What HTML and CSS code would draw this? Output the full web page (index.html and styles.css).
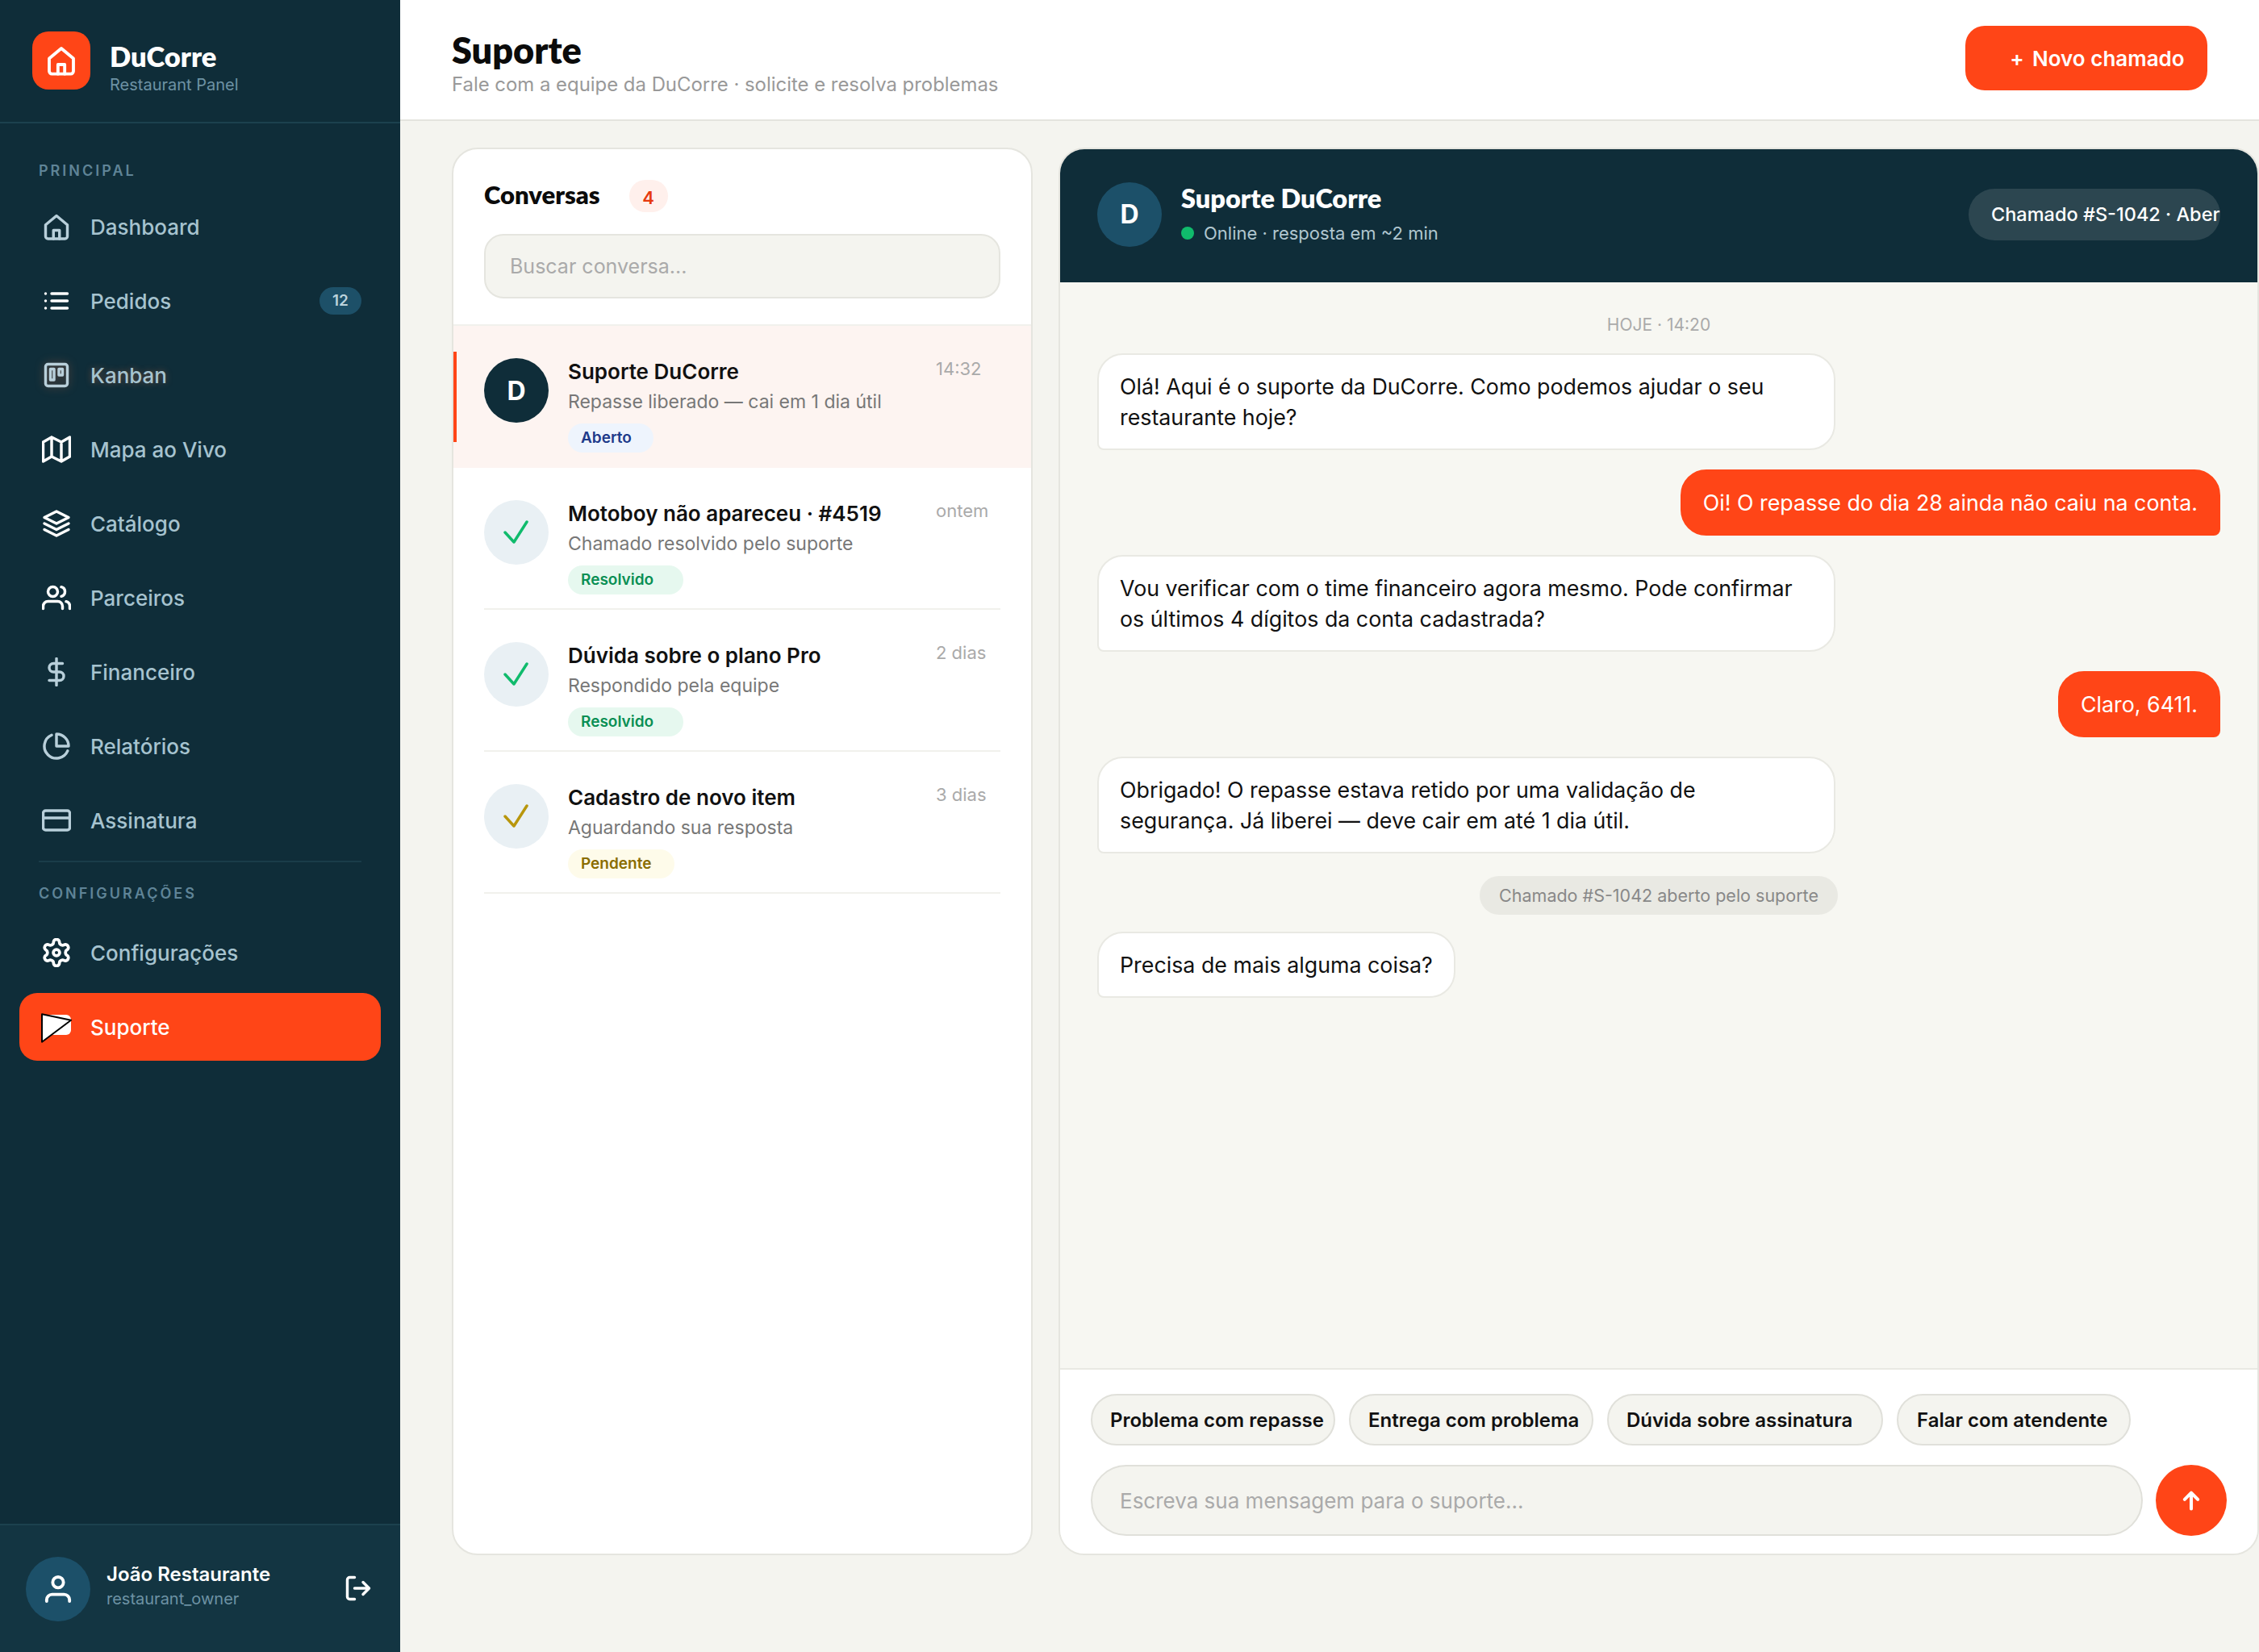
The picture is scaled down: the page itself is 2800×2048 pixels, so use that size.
FILE: index.html
```html
<!DOCTYPE html>
<html lang="pt-BR">

<head>
    <meta charset="UTF-8">
    <title>Suporte - DuCorre</title>
    <link rel="stylesheet" href="styles.css">
</head>

<body>
    <div class="app">
        <aside class="sidebar">
            <div class="brand">
                <div class="brand-logo">
                    <svg class="icon" viewBox="0 0 24 24"><path d="M3 10.500 12 3l9 7.500V20a2 2 0 0 1-2 2H5a2 2 0 0 1-2-2z" /><path d="M9.500 22v-7h5v7" /></svg>
                </div>
                <div class="brand-text">
                    <div class="brand-name">DuCorre</div>
                    <div class="brand-sub">Restaurant Panel</div>
                </div>
            </div>

            <nav class="nav">
                <div class="nav-label">PRINCIPAL</div>
                <a class="nav-item">
                    <svg class="icon muted" viewBox="0 0 24 24"><path d="M3 10.500 12 3l9 7.500V20a2 2 0 0 1-2 2H5a2 2 0 0 1-2-2z" /><path d="M9.500 22v-7h5v7" /></svg>
                    Dashboard
                </a>
                <a class="nav-item">
                    <svg class="icon" viewBox="0 0 24 24"><path d="M8 6h13M8 12h13M8 18h13M3 6h.01M3 12h.01M3 18h.01" /></svg>
                    Pedidos
                    <span class="nav-badge">12</span>
                </a>
                <a class="nav-item nav-glow">
                    <svg class="icon muted" viewBox="0 0 24 24"><rect x="3" y="3" width="18" height="18" rx="2" /><rect x="7" y="7" width="3" height="9" /><rect x="14" y="7" width="3" height="5" /></svg>
                    Kanban
                </a>
                <a class="nav-item">
                    <svg class="icon" viewBox="0 0 24 24"><path d="M1 6v16l7-4 8 4 7-4V2l-7 4-8-4zM8 2v16M16 6v16" /></svg>
                    Mapa ao Vivo
                </a>
                <a class="nav-item">
                    <svg class="icon" viewBox="0 0 24 24"><path d="M12 2 2 7l10 5 10-5zM2 17l10 5 10-5M2 12l10 5 10-5" /></svg>
                    Catálogo
                </a>
                <a class="nav-item">
                    <svg class="icon" viewBox="0 0 24 24"><path d="M17 21v-2a4 4 0 0 0-4-4H5a4 4 0 0 0-4 4v2" /><circle cx="9" cy="7" r="4" /><path d="M23 21v-2a4 4 0 0 0-3-3.870M16 3.130a4 4 0 0 1 0 7.750" /></svg>
                    Parceiros
                </a>
                <a class="nav-item">
                    <svg class="icon muted" viewBox="0 0 24 24"><path d="M12 1v22M17 5H9.500a3.500 3.500 0 0 0 0 7h5a3.500 3.500 0 0 1 0 7H6" /></svg>
                    Financeiro
                </a>
                <a class="nav-item">
                    <svg class="icon muted" viewBox="0 0 24 24"><path d="M21.210 15.890A10 10 0 1 1 8 2.830" /><path d="M22 12A10 10 0 0 0 12 2v10z" /></svg>
                    Relatórios
                </a>
                <a class="nav-item">
                    <svg class="icon muted" viewBox="0 0 24 24"><rect x="1" y="4" width="22" height="16" rx="2" /><path d="M1 10h22" /></svg>
                    Assinatura
                </a>

                <div class="nav-divider"></div>
                <div class="nav-label nav-label-second">CONFIGURAÇÕES</div>
                <a class="nav-item">
                    <svg class="icon" viewBox="1 1 22 22"><path d="M12.220 2h-.44a2 2 0 0 0-2 2v.18a2 2 0 0 1-1 1.730l-.43.25a2 2 0 0 1-2 0l-.15-.08a2 2 0 0 0-2.730.73l-.22.38a2 2 0 0 0 .73 2.730l.15.1a2 2 0 0 1 1 1.720v.51a2 2 0 0 1-1 1.740l-.15.09a2 2 0 0 0-.73 2.730l.22.38a2 2 0 0 0 2.730.73l.15-.08a2 2 0 0 1 2 0l.43.25a2 2 0 0 1 1 1.730V20a2 2 0 0 0 2 2h.44a2 2 0 0 0 2-2v-.18a2 2 0 0 1 1-1.730l.43-.25a2 2 0 0 1 2 0l.15.08a2 2 0 0 0 2.730-.73l.22-.39a2 2 0 0 0-.73-2.730l-.15-.08a2 2 0 0 1-1-1.740v-.5a2 2 0 0 1 1-1.740l.15-.09a2 2 0 0 0 .73-2.730l-.22-.38a2 2 0 0 0-2.730-.73l-.15.08a2 2 0 0 1-2 0l-.43-.25a2 2 0 0 1-1-1.730V4a2 2 0 0 0-2-2z" /><circle cx="12" cy="12" r="2.400" /></svg>
                    Configurações
                </a>
                <a class="nav-item nav-active">
                    <svg class="icon-send" viewBox="0 0 24 24"><rect x="0" y="2" width="24" height="16.700" rx="4" /><path class="send-wing" d="M0 1.500 24 6.500 0 24.500z" /></svg>
                    Suporte
                </a>
            </nav>

            <div class="user">
                <div class="user-avatar">
                    <svg class="icon" viewBox="0 0 24 24"><circle cx="12" cy="7" r="4" /><path d="M3.500 21v-1a4 4 0 0 1 4-4h9a4 4 0 0 1 4 4v1" /></svg>
                </div>
                <div class="user-info">
                    <div class="user-name">João Restaurante</div>
                    <div class="user-role">restaurant_owner</div>
                </div>
                <svg class="icon logout" viewBox="0 0 24 24"><path d="M9 21H5a2 2 0 0 1-2-2V5a2 2 0 0 1 2-2h4M16 17l5-5-5-5M21 12H9" /></svg>
            </div>
        </aside>

        <div class="main">
            <header class="topbar">
                <div class="topbar-text">
                    <h1 class="page-title">Suporte</h1>
                    <div class="page-sub">Fale com a equipe da DuCorre · solicite e resolva problemas</div>
                </div>
                <button type="button" class="btn-new"><span class="btn-plus">+</span>Novo chamado</button>
            </header>

            <div class="content">
                <section class="conversations">
                    <div class="conv-head">
                        <div class="conv-title-row">
                            <h2 class="conv-title">Conversas</h2>
                            <span class="conv-count">4</span>
                        </div>
                        <input class="conv-search" type="text" placeholder="Buscar conversa...">
                    </div>

                    <div class="conv active">
                        <div class="conv-inner">
                            <div class="conv-avatar dark">D</div>
                            <div class="conv-body">
                                <div class="conv-name">Suporte DuCorre</div>
                                <div class="conv-last">Repasse liberado — cai em 1 dia útil</div>
                                <span class="tag tag-open">Aberto</span>
                            </div>
                            <div class="conv-time">14:32</div>
                        </div>
                    </div>
                    <div class="conv">
                        <div class="conv-inner">
                            <div class="conv-avatar">
                                <svg class="check" viewBox="0 0 32 32"><path d="M2 16 13 28 29 3" /></svg>
                            </div>
                            <div class="conv-body">
                                <div class="conv-name">Motoboy não apareceu · #4519</div>
                                <div class="conv-last">Chamado resolvido pelo suporte</div>
                                <span class="tag tag-done">Resolvido</span>
                            </div>
                            <div class="conv-time">ontem</div>
                        </div>
                    </div>
                    <div class="conv">
                        <div class="conv-inner">
                            <div class="conv-avatar">
                                <svg class="check" viewBox="0 0 32 32"><path d="M2 16 13 28 29 3" /></svg>
                            </div>
                            <div class="conv-body">
                                <div class="conv-name">Dúvida sobre o plano Pro</div>
                                <div class="conv-last">Respondido pela equipe</div>
                                <span class="tag tag-done">Resolvido</span>
                            </div>
                            <div class="conv-time">2 dias</div>
                        </div>
                    </div>
                    <div class="conv">
                        <div class="conv-inner">
                            <div class="conv-avatar">
                                <svg class="check check-wait" viewBox="0 0 32 32"><path d="M2 16 13 28 29 3" /></svg>
                            </div>
                            <div class="conv-body">
                                <div class="conv-name">Cadastro de novo item</div>
                                <div class="conv-last">Aguardando sua resposta</div>
                                <span class="tag tag-pending">Pendente</span>
                            </div>
                            <div class="conv-time">3 dias</div>
                        </div>
                    </div>
                </section>

                <section class="chat">
                    <div class="chat-head">
                        <div class="chat-avatar">D</div>
                        <div class="chat-who">
                            <div class="chat-name">Suporte DuCorre</div>
                            <div class="chat-status"><span class="dot"></span>Online · resposta em ~2 min</div>
                        </div>
                        <div class="chat-chip">Chamado #S-1042 · Aberto</div>
                    </div>

                    <div class="messages">
                        <div class="msg-date">HOJE · 14:20</div>
                        <div class="msg">Olá! Aqui é o suporte da DuCorre. Como podemos ajudar o seu restaurante hoje?</div>
                        <div class="msg mine">Oi! O repasse do dia 28 ainda não caiu na conta.</div>
                        <div class="msg">Vou verificar com o time financeiro agora mesmo. Pode confirmar os últimos 4 dígitos da conta cadastrada?</div>
                        <div class="msg mine">Claro, 6411.</div>
                        <div class="msg">Obrigado! O repasse estava retido por uma validação de segurança. Já liberei — deve cair em até 1 dia útil.</div>
                        <div class="msg-system">Chamado #S-1042 aberto pelo suporte</div>
                        <div class="msg">Precisa de mais alguma coisa?</div>
                    </div>

                    <div class="composer">
                        <div class="quick">
                            <button type="button" class="quick-btn">Problema com repasse</button>
                            <button type="button" class="quick-btn">Entrega com problema</button>
                            <button type="button" class="quick-btn">Dúvida sobre assinatura</button>
                            <button type="button" class="quick-btn">Falar com atendente</button>
                        </div>
                        <div class="composer-row">
                            <input class="composer-input" type="text" placeholder="Escreva sua mensagem para o suporte...">
                            <button type="button" class="send">
                                <svg class="send-arrow" viewBox="0 0 24 24"><path d="M12 21V4M5 11l7-7 7 7" /></svg>
                            </button>
                        </div>
                    </div>
                </section>
            </div>
        </div>
    </div>
</body>

</html>
```

FILE: styles.css
```css
* {
    box-sizing: border-box;
}

html,
body {
    margin: 0;
    height: 100%;
    overflow: hidden;
    font-family: Inter, "Liberation Sans", sans-serif;
    color: #111;
}

.app {
    display: flex;
    height: 2048px;
    background-color: #f4f4ef;
}

.icon {
    width: 36px;
    height: 36px;
    flex: none;
    fill: none;
    stroke: #fff;
    stroke-width: 2.300;
    stroke-linecap: round;
    stroke-linejoin: round;
}

.icon.muted {
    stroke: #b8cfda;
}

/* sidebar */
.sidebar {
    width: 496px;
    flex: none;
    display: flex;
    flex-direction: column;
    background-color: #0f2d39;
}

.brand {
    height: 153px;
    flex: none;
    display: flex;
    align-items: center;
    gap: 24px;
    padding: 0 40px 1px;
    border-bottom: 2px solid #1c414e;
}

.brand-logo {
    width: 72px;
    height: 72px;
    display: flex;
    align-items: center;
    justify-content: center;
    background-color: #ff4517;
    border-radius: 20px;
}

.brand-logo .icon {
    width: 40px;
    height: 40px;
}

.brand-text {
    margin-top: 20px;
}

.brand-name {
    margin-bottom: 2px;
    font-family: Lato, "Liberation Sans", sans-serif;
    font-size: 34.500px;
    font-weight: 800;
    line-height: 38px;
    color: #fff;
}

.brand-sub {
    font-size: 20px;
    line-height: 28px;
    color: #6d92a4;
}

.nav {
    flex: 1;
    display: flex;
    flex-direction: column;
    gap: 8px;
    padding: 48px 24px 0;
}

.nav-label {
    padding-left: 24px;
    margin-bottom: 8px;
    font-size: 18px;
    font-weight: 600;
    line-height: 22px;
    letter-spacing: 3px;
    color: #5f8497;
}

.nav-label-second {
    margin-top: 20px;
    margin-bottom: 12px;
}

.nav-item {
    height: 84px;
    display: flex;
    align-items: center;
    gap: 24px;
    padding: 0 28px;
    font-size: 26px;
    font-weight: 500;
    color: #a6c3cf;
    border-radius: 22px;
}

.nav-glow {
    text-shadow: 0 0 8px rgba(255, 120, 70, .35);
}

.nav-glow .icon {
    filter: drop-shadow(0 0 6px rgba(255, 120, 70, .3));
}

.nav-active {
    background-color: #ff4517;
    color: #fff;
}

.icon-send {
    width: 36px;
    height: 36px;
    flex: none;
    overflow: visible;
    fill: #fff;
}

.send-wing {
    stroke: #000;
    stroke-width: 1.300;
    stroke-linejoin: round;
}

.nav-badge {
    margin-left: auto;
    margin-right: -4px;
    width: 52px;
    height: 34px;
    font-size: 19px;
    font-weight: 600;
    line-height: 34px;
    text-align: center;
    color: #bcd3dc;
    background-color: #1d5068;
    border-radius: 17px;
}

.nav-divider {
    height: 2px;
    margin: 0 24px;
    background-color: #1a3c49;
}

.user {
    height: 159px;
    flex: none;
    display: flex;
    align-items: center;
    gap: 20px;
    padding: 0 34px 0 32px;
    background-color: #133542;
    border-top: 2px solid #1c414e;
}

.user-avatar {
    width: 80px;
    height: 80px;
    flex: none;
    display: flex;
    align-items: center;
    justify-content: center;
    background-color: #1c5069;
    border-radius: 50%;
}

.user-avatar .icon {
    width: 40px;
    height: 40px;
}

.user-info {
    flex: 1;
    margin-bottom: 8px;
}

.user-name {
    font-size: 24px;
    font-weight: 600;
    line-height: 32px;
    color: #fff;
}

.user-role {
    font-size: 20px;
    line-height: 28px;
    color: #6d92a4;
}

.logout {
    margin-top: -2px;
}

/* main */
.main {
    flex: 1;
    min-width: 0;
    display: flex;
    flex-direction: column;
}

.topbar {
    height: 150px;
    flex: none;
    display: flex;
    align-items: center;
    justify-content: space-between;
    padding: 0 64px 4px;
    background-color: #fff;
    border-bottom: 2px solid #e4e4de;
}

.topbar-text {
    margin-top: 13px;
}

.page-title {
    margin: 0;
    font-family: Lato, "Liberation Sans", sans-serif;
    font-size: 45px;
    font-weight: 800;
    line-height: 52px;
    color: #0b0b0b;
}

.page-sub {
    font-size: 23.900px;
    line-height: 34px;
    color: #999;
}

.btn-new {
    width: 300px;
    height: 80px;
    padding: 0 0 0 45px;
    display: flex;
    align-items: center;
    border: none;
    border-radius: 24px;
    background-color: #ff4517;
    color: #fff;
    font-family: inherit;
    font-size: 26px;
    font-weight: 600;
}

.btn-plus {
    width: 38px;
}

.content {
    flex: 1;
    min-height: 0;
    display: grid;
    grid-template-columns: 720px 1fr;
    gap: 32px;
    padding: 33px 0 120px 64px;
}

.conversations {
    background-color: #fff;
    border: 2px solid #e5e5df;
    border-radius: 32px;
    overflow: hidden;
}

.conv-head {
    height: 219px;
    padding: 33px 38px 0;
    border-bottom: 2px solid #f1f1ec;
}

.conv-title-row {
    display: flex;
    align-items: center;
    gap: 36px;
    height: 46px;
}

.conv-title {
    margin: 0;
    font-family: Lato, "Liberation Sans", sans-serif;
    font-size: 31px;
    font-weight: 800;
    color: #0b0b0b;
}

.conv-count {
    width: 48px;
    height: 40px;
    margin-top: 4px;
    font-size: 22px;
    font-weight: 600;
    line-height: 44px;
    text-align: center;
    color: #e63a0f;
    background-color: #fff0ec;
    border-radius: 20px;
}

.conv-search {
    display: block;
    width: 640px;
    height: 80px;
    margin-top: 26px;
    padding: 0 30px;
    font-family: inherit;
    font-size: 25px;
    background-color: #f4f4ef;
    border: 2px solid #e5e5df;
    border-radius: 24px;
    outline: none;
}

.conv-search::placeholder {
    color: #aaa;
}

.conv {
    position: relative;
    padding: 0 38px;
}

.conv.active {
    background-color: #fdf4f1;
}

.conv.active::before {
    content: "";
    position: absolute;
    left: 0;
    top: 32px;
    width: 4px;
    height: 112px;
    background-color: #ff4517;
}

.conv-inner {
    height: 176px;
    display: flex;
    gap: 24px;
    padding-top: 40px;
    border-bottom: 2px solid #f1f1ec;
}

.conv.active .conv-inner {
    border-bottom-color: transparent;
}

.conv-avatar {
    width: 80px;
    height: 80px;
    flex: none;
    display: flex;
    align-items: center;
    justify-content: center;
    background-color: #e9f0f4;
    border-radius: 50%;
}

.conv-avatar.dark {
    background-color: #0f2d39;
    color: #fff;
    font-size: 32px;
    font-weight: 700;
}

.check {
    width: 32px;
    height: 32px;
    fill: none;
    stroke: #10bb6c;
    stroke-width: 3.500;
    stroke-linecap: round;
    stroke-linejoin: round;
}

.check-wait {
    stroke: #b8960c;
}

.conv-body {
    flex: 1;
    min-width: 0;
}

.conv-name {
    font-size: 26px;
    font-weight: 600;
    line-height: 34px;
    color: #111;
}

.conv-last {
    margin-top: 2px;
    font-size: 23px;
    line-height: 36px;
    color: #777;
}

.tag {
    display: block;
    height: 36px;
    margin-top: 9px;
    padding-left: 16px;
    font-size: 19px;
    font-weight: 600;
    line-height: 36px;
    border-radius: 18px;
}

.tag-open {
    width: 106px;
    color: #1e3a8a;
    background-color: #eef4fd;
}

.tag-done {
    width: 143px;
    color: #0a8f54;
    background-color: #e6f8ef;
}

.tag-pending {
    width: 132px;
    color: #8a6d00;
    background-color: #fefbea;
}

.conv-time {
    width: 80px;
    flex: none;
    margin-top: -1px;
    font-size: 22px;
    line-height: 28px;
    color: #aaa;
}

/* chat */
.chat {
    min-width: 0;
    display: flex;
    flex-direction: column;
    background-color: #f7f7f2;
    border: 2px solid #e5e5df;
    border-radius: 32px;
    overflow: hidden;
}

.chat-head {
    height: 165px;
    flex: none;
    display: flex;
    align-items: center;
    gap: 24px;
    padding: 0 46px 4px;
    background-color: #0f2d39;
}

.chat-avatar {
    width: 80px;
    height: 80px;
    flex: none;
    display: flex;
    align-items: center;
    justify-content: center;
    background-color: #1c5069;
    color: #fff;
    font-size: 32px;
    font-weight: 700;
    border-radius: 50%;
}

.chat-who {
    flex: none;
}

.chat-name {
    font-family: Lato, "Liberation Sans", sans-serif;
    font-size: 32.500px;
    font-weight: 800;
    line-height: 40px;
    color: #fff;
}

.chat-status {
    display: flex;
    align-items: center;
    gap: 12px;
    margin-top: 7px;
    font-size: 22px;
    line-height: 32px;
    color: #b0c6cf;
}

.dot {
    width: 16px;
    height: 16px;
    background-color: #10bb6c;
    border-radius: 50%;
}

.chat-chip {
    width: 312px;
    height: 64px;
    margin-left: auto;
    padding-left: 28px;
    overflow: hidden;
    white-space: nowrap;
    font-size: 23.500px;
    font-weight: 500;
    line-height: 64px;
    color: #fff;
    background-color: #2c4650;
    border-radius: 32px;
}

.messages {
    flex: 1;
    min-height: 0;
    display: flex;
    flex-direction: column;
    align-items: flex-start;
    gap: 24px;
    padding: 40px 46px 0;
}

.msg-date {
    align-self: center;
    margin-bottom: -2px;
    font-size: 21px;
    line-height: 26px;
    color: #aaa;
}

.msg {
    max-width: 915px;
    padding: 20px 26px;
    font-size: 26.800px;
    line-height: 38px;
    color: #111;
    background-color: #fff;
    border: 2px solid #e9e9e3;
    border-radius: 32px 32px 32px 8px;
}

.msg.mine {
    align-self: flex-end;
    color: #fff;
    background-color: #ff4517;
    border-color: #ff4517;
    border-radius: 32px 32px 8px 32px;
}

.msg-system {
    align-self: center;
    margin: 4px 0 -3px;
    padding: 0 24px;
    font-size: 21.500px;
    line-height: 48px;
    color: #888;
    background-color: #e9e9e3;
    border-radius: 24px;
}

.composer {
    height: 230px;
    flex: none;
    padding: 30px 38px 0;
    background-color: #fff;
    border-top: 2px solid #e9e9e3;
}

.quick {
    display: flex;
    gap: 17px;
}

.quick-btn {
    width: 303px;
    height: 64px;
    padding: 0 0 0 22px;
    text-align: left;
    white-space: nowrap;
    font-family: inherit;
    font-size: 24px;
    font-weight: 600;
    color: #111;
    background-color: #f4f4ef;
    border: 2px solid #e0e0da;
    border-radius: 32px;
}

.quick-btn:nth-child(3) {
    width: 342px;
}

.quick-btn:nth-child(4) {
    width: 290px;
    padding-left: 23px;
}

.composer-row {
    display: flex;
    align-items: center;
    gap: 16px;
    margin-top: 24px;
}

.composer-input {
    flex: 1;
    min-width: 0;
    height: 88px;
    padding: 0 34px;
    font-family: inherit;
    font-size: 26px;
    background-color: #f4f4ef;
    border: 2px solid #e0e0da;
    border-radius: 44px;
    outline: none;
}

.composer-input::placeholder {
    color: #aaa;
}

.send {
    width: 88px;
    height: 88px;
    flex: none;
    display: flex;
    align-items: center;
    justify-content: center;
    padding: 0;
    border: none;
    background-color: #ff4517;
    border-radius: 50%;
}

.send-arrow {
    width: 28px;
    height: 28px;
    fill: none;
    stroke: #fff;
    stroke-width: 3.500;
    stroke-linecap: round;
    stroke-linejoin: round;
}
```
